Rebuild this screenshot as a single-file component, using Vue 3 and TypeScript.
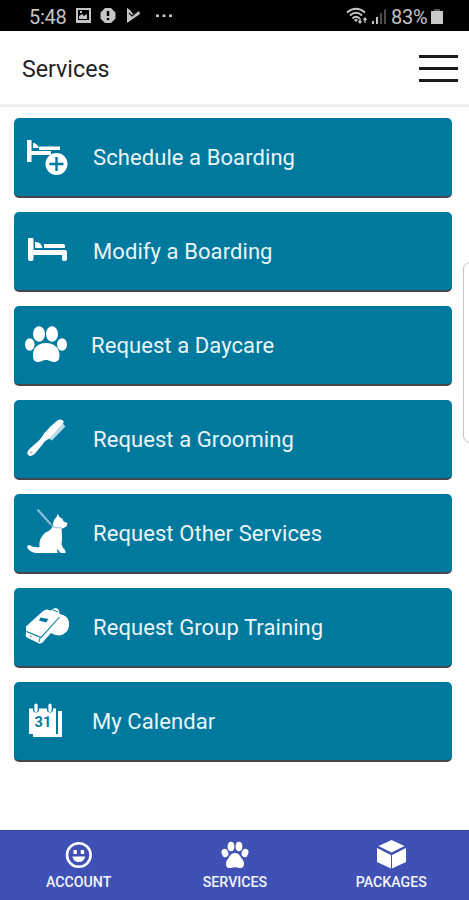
<script setup lang="ts">
interface Service {
  icon: string
  label: string
}

const services: Service[] = [
  { icon: 'board', label: 'Schedule a Boarding' },
  { icon: 'bed', label: 'Modify a Boarding' },
  { icon: 'paw', label: 'Request a Daycare' },
  { icon: 'comb', label: 'Request a Grooming' },
  { icon: 'dog', label: 'Request Other Services' },
  { icon: 'whistle', label: 'Request Group Training' },
  { icon: 'calendar', label: 'My Calendar' },
]
</script>

<template>
  <div class="screen">
    <header class="status">
      <span class="clock">5:48</span>
      <svg class="notices" width="100" height="20" viewBox="0 0 100 20" fill="#c4c4c4">
        <path fill-rule="evenodd" d="M1 1h15v15H1zM3 3v10h11V3z" />
        <path d="M4 12V9l3-2 2 2 3-2v5zM5 4h2v2H5z" />
        <path fill-rule="evenodd" d="M30 1h6l4.500 4.500v6L36 16h-6l-4.500-4.500v-6zM31.800 4v5h2.400V4zM31.800 11v2h2.400v-2z" />
        <path d="M52 1l3 2 3 4 6-3 1 3-13 9z" />
        <path d="M54 6l3 3 6-5" fill="none" stroke="#111" stroke-width="1.200" />
        <rect x="81" y="7.500" width="3" height="2.500" /><rect x="87.500" y="7.500" width="3" height="2.500" /><rect x="94" y="7.500" width="3" height="2.500" />
      </svg>
      <svg class="signal" width="42" height="20" viewBox="0 0 42 20" fill="none" stroke="#c4c4c4">
        <path d="M1 5.500Q10-2 19 5.500M4 8.500Q10 3 16 8.500M6.500 11.500Q10 8 13.500 11.500" stroke-width="1.900" />
        <path d="M8 13l2-1.500 2 1.500-2 2z" fill="#c4c4c4" stroke="none" />
        <path d="M14 11v5M12.500 14l1.500 2 1.500-2M19 16v-5M17.500 13l1.500-2 1.500 2" stroke-width="1.300" />
        <path d="M27 17v-3M31 17V10" stroke-width="2" />
        <path d="M35 17V6M39 17V2.500" stroke="#4c4c4c" stroke-width="2" />
      </svg>
      <span class="percent">83%</span>
      <svg class="battery" width="12" height="18" viewBox="0 0 12 18"><path d="M3 1h6v2H3z" fill="#555" /><path d="M0 3h12v13H0z" fill="#c9c9c9" /></svg>
    </header>

    <div class="titlebar">
      <h1>Services</h1>
      <button class="menu" aria-label="Menu"><i /><i /><i /></button>
    </div>

    <main class="list">
      <button v-for="s in services" :key="s.icon" class="card" :class="s.icon">
        <svg class="icon" width="48" height="48" viewBox="0 0 48 48" fill="#fff">
          <g v-if="s.icon === 'board'">
            <path d="M5 6h4.500v11H29v4H9.500v7H5zM11 14V9q4 0 6 5zM17 12.500h21v3.500H17z" />
            <circle cx="34.500" cy="30" r="11" />
            <path d="M34.500 23v14M27.500 30h14" stroke="#00799f" stroke-width="2.400" />
          </g>
          <path v-else-if="s.icon === 'bed'" d="M7 10h3.500q1 0 1 1v11H43q2 0 2 2v7q0 2-2 2h-1.500q-1.500 0-1.500-2v-4H11.500v4q0 2-2 2H8q-2 0-2-2V11q0-1 1-1zM13 20v-6q6-.5 7.500 6zM22 16h19q2 0 2 2v2H22z" />
          <g v-else-if="s.icon === 'paw'">
            <ellipse cx="17" cy="12" rx="6" ry="7.800" /><ellipse cx="30" cy="12" rx="6" ry="7.800" />
            <ellipse cx="7.800" cy="22.500" rx="4.800" ry="6.200" /><ellipse cx="40" cy="22.500" rx="5" ry="6.200" />
            <path d="M11 33c0-6 4-12 13-12s13.500 6 13.500 12c0 5-2 7-5 7-4 0-5-2-8.500-2s-4.500 2-8 2-5-2-5-7z" />
          </g>
          <g v-else-if="s.icon === 'comb'">
            <path d="M39 5.500l4.500 5L30 24.500l-5-3z" fill="#b5dae6" />
            <path d="M36 4q4-1.500 6 2L27.500 22.500q-5 2-7 6L13.500 37q-4 4.500-7.500 2-2-3 2-6.500l9-8q3-3 5-7Q29 9 36 4z" />
            <circle cx="9.500" cy="36.500" r="1.100" fill="#7fbccf" />
          </g>
          <g v-else-if="s.icon === 'dog'">
            <path d="M15.500-.5L29 14.500" fill="none" stroke="#8fc0dc" stroke-width="2" />
            <path d="M31 15q0-5 3.500-8L35.500 4 38 7.500q3 .5 3.500 4l4 1.500q-.5 4-3 4.500L39.500 19q1 9 0 15 1 4 3.500 6 1 2 .500 3h-5L35.500 39l-.5 1.500 1 2.500H17q-9 .5-12-6 0-2 2.500-2 4 3 10 2-1-9 6-14.500 7-3 7.500-7.500z" />
            <path d="M29 15l4 2.500 7 .5" fill="none" stroke="#8fc0dc" stroke-width="1.200" />
          </g>
          <g v-else-if="s.icon === 'whistle'">
            <path d="M4 22.500L21 7q2-1.500 4-1.500l4.500 1Q31 4 33.500 4q4 .5 4 6 8 1 9.500 8 1 9-6 12.500-6 2.500-12-1.500l-8 9q-2 2-4 1.500L5 33.500Q3 32 4 29z" />
            <path d="M4.500 27.500l14.500 6L37.500 13" fill="none" stroke="#00799f" stroke-width="1.100" />
            <path d="M31 6l5 2M8 31.500l1.500 1M18 34l-1 4" fill="none" stroke="#00799f" stroke-width="1" />
            <path d="M18.500 13.500l8 1.500-2.500 3.500-7-2z" fill="#00799f" />
          </g>
          <g v-else>
            <path d="M7 10.500h27V36H7zM36 13h4v26H11v-3h25z" />
            <path d="M11 8.500V13q3 3 6 0V8.500zM25 8.500V13q3 3 6 0V8.500z" fill="#00799f" />
            <path d="M14 7v5.500M28 7v5.500" stroke="#fff" stroke-width="3.200" stroke-linecap="round" />
            <text x="21" y="29" text-anchor="middle" class="day">31</text>
          </g>
        </svg>
        <span class="label">{{ s.label }}</span>
      </button>
    </main>

    <nav class="tabs">
      <a class="tab">
        <svg width="30" height="30" viewBox="0 0 30 30">
          <circle cx="14.800" cy="15" r="11.800" fill="none" stroke="#fff" stroke-width="2.600" />
          <path d="M9.500 10h3.300v4H9.500zM16.800 10h3.300v4h-3.300zM8.300 16.500h13Q19.800 22 14.800 22t-6.500-5.500z" fill="#fff" />
        </svg>
        <span>ACCOUNT</span>
      </a>
      <a class="tab">
        <svg width="30" height="30" viewBox="0 0 30 30" fill="#fff">
          <ellipse cx="11" cy="6.500" rx="3.400" ry="4.700" /><ellipse cx="19" cy="6.500" rx="3.400" ry="4.700" />
          <ellipse cx="5" cy="13" rx="3.300" ry="4.200" transform="rotate(-20 5 13)" /><ellipse cx="25" cy="13" rx="3.300" ry="4.200" transform="rotate(20 25 13)" />
          <path d="M15 13c4 0 5 3 7.200 6 3 4 2 8.500-1 9-2 .3-4-.7-6.200-.7s-4.200 1-6.200.7c-3-.5-4-5-1-9 2.200-3 3.200-6 7.200-6z" />
        </svg>
        <span>SERVICES</span>
      </a>
      <a class="tab">
        <svg width="30" height="30" viewBox="0 0 30 30" fill="#fff">
          <path d="M15.500 0l13 6-13 6.500-13-6.500zM1 8l14 7v13.500L1 22zM30 8l-14 7v13.500L30 22z" />
        </svg>
        <span>PACKAGES</span>
      </a>
    </nav>
    <div class="edge-handle" />
  </div>
</template>

<style>
body { margin: 0; background: #fefefe; }
</style>

<style scoped>
.screen {
  position: relative;
  display: flex;
  flex-direction: column;
  width: 469px;
  height: 900px;
  overflow: hidden;
  background: #fefefe;
  font-family: Roboto, sans-serif;
}
button { border: 0; padding: 0; font: inherit; background: none; }
.status {
  display: flex;
  align-items: center;
  box-sizing: border-box;
  height: 31px;
  padding: 3px 26px 0 29px;
  background: #000;
  color: #c4c4c4;
  font-size: 20px;
}
.clock { width: 46px; letter-spacing: -.3px; }
.signal { margin-left: auto; }
.percent { width: 38px; margin: 0 2px 0 3px; letter-spacing: -.3px; }
.titlebar {
  display: flex;
  align-items: center;
  justify-content: space-between;
  box-sizing: border-box;
  height: 76px;
  padding: 0 11px 0 22px;
  border-bottom: 3px solid #eee;
}
h1 { margin: 3px 0 0; color: #222; font-size: 23.200px; font-weight: 400; }
.menu { display: flex; flex-direction: column; gap: 9px; width: 39px; margin-top: 2px; }
.menu i { height: 3px; background: #1b1b1b; }
.list { display: flex; flex: 1; flex-direction: column; gap: 14px; padding: 11px 17px 0 13.500px; }
.card {
  display: flex;
  align-items: center;
  box-sizing: border-box;
  width: 438.500px;
  height: 80px;
  padding-left: 8.500px;
  border-bottom: 2px solid #45464b;
  border-radius: 5px;
  background: #00799f;
  color: #e9f5f8;
  font-size: 22px;
  letter-spacing: .08px;
  text-align: left;
}
.icon { flex: none; margin: 2px 23px 0 0; overflow: visible; }
.paw .icon { margin-right: 21px; }
.calendar .icon { margin-right: 22px; }
.day { fill: #00799f; font: 700 14.500px Roboto, sans-serif; }
.tabs {
  display: grid;
  grid-template-columns: repeat(3, 1fr);
  height: 69px;
  border-top: 1px solid #3443a0;
  background: #3f51b5;
}
.tab {
  display: flex;
  flex-direction: column;
  align-items: center;
  padding: 9px 0 0 1px;
  color: #f4f5fb;
  font-size: 14.200px;
  font-weight: 500;
  line-height: 24px;
}
.edge-handle {
  position: absolute;
  top: 262px;
  right: -8px;
  box-sizing: border-box;
  width: 14px;
  height: 181px;
  border: 1px solid #c5c5c5;
  border-radius: 7px;
}
</style>
